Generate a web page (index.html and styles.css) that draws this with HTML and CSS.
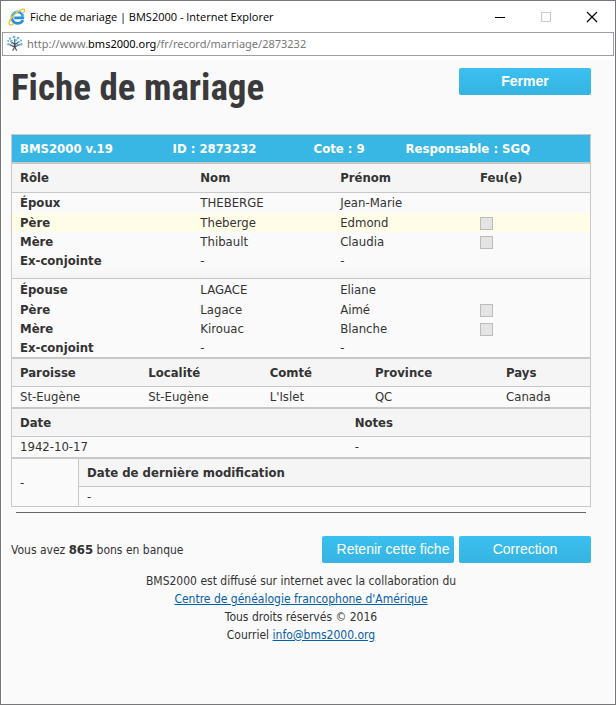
FILE: index.html
```html
<!DOCTYPE html>
<html lang="fr">
  <head>
    <meta charset="UTF-8" />
    <meta name="viewport" content="width=device-width, initial-scale=1.0" />
    <title>Fiche de mariage | BMS2000</title>
    <link rel="stylesheet" href="styles.css">
  </head>
  <body>
    <div class="window">
      <div class="titlebar">
        <svg class="icon" width="18" height="18" viewBox="0 0 18 18" fill="none">
          <path d="M15 12.2C13.8 14.4 11.8 15.4 9.7 15.4C6.4 15.4 4 13 4 9.7C4 6.3 6.4 4 9.7 4C12.9 4 15.1 6.2 14.9 9.9H6.2" stroke="#2b8fd6" stroke-width="2.6" />
          <path d="M15.6 9.2C15.4 5.6 13 3.1 9.7 3.1C6.2 3.1 3.4 6 3.2 9.2" stroke="#5dc3f3" stroke-width="1.4" />
          <path d="M15.4 5C17.3 2.6 16.9 .8 14.7 1.3C11.4 2 5.7 6.5 2.8 11C.6 14.5 .6 17 2.7 16.8C3.8 16.7 5 16 6 15.3" stroke="#f0c83c" stroke-width="1.5" />
        </svg>
        <span class="caption">Fiche de mariage | BMS2000 - Internet Explorer</span>
        <button class="win-btn" aria-label="Réduire">
          <svg width="12" height="12" viewBox="0 0 12 12"><path d="M1 6.5H11" stroke="#000" /></svg>
        </button>
        <button class="win-btn" aria-label="Agrandir" disabled>
          <svg width="12" height="12" viewBox="0 0 12 12"><path d="M1.5 1.5H10.5V10.5H1.5Z" fill="none" stroke="#c8c8c8" /></svg>
        </button>
        <button class="win-btn" aria-label="Fermer la fenêtre">
          <svg width="12" height="12" viewBox="0 0 12 12"><path d="M1 1L11 11M11 1L1 11" stroke="#000" stroke-width="1.2" /></svg>
        </button>
      </div>

      <div class="address">
        <svg class="icon" width="18" height="18" viewBox="0 0 18 18" fill="none">
          <path d="M6.5 15.5C8.3 14.5 8.4 12 8.3 9L4.5 6M8.5 10L13 6.5M8.8 9V4M8.3 12L3.5 9.5M9.5 11.5L14 9.5M8.9 9C8.9 12.5 9.5 14.5 11 15.5" stroke="#4a4f55" stroke-width="1.1" />
          <g fill="#6db6dc">
            <circle cx="4" cy="3.5" r="1.2" /><circle cx="8" cy="2.2" r="1.4" />
            <circle cx="12" cy="3" r="1.3" /><circle cx="15" cy="5.5" r="1.1" />
            <circle cx="2.2" cy="6" r="1.1" /><circle cx="5.5" cy="5.8" r="1.1" />
            <circle cx="10" cy="5.2" r="1.1" /><circle cx="12.8" cy="6.8" r="1.1" />
            <circle cx="2.5" cy="9.2" r="1.3" /><circle cx="15.2" cy="9.3" r="1.3" />
            <circle cx="6" cy="8.5" r="1" /><circle cx="11.5" cy="9.5" r="1" />
          </g>
        </svg>
        <span class="url">http://www.<b>bms2000.org</b>/fr/record/marriage/2873232</span>
      </div>

      <div class="page">
        <div class="heading">
          <h1>Fiche de mariage</h1>
          <button class="btn btn-bold">Fermer</button>
        </div>

        <table class="version">
          <tr>
            <th>BMS2000 v.19</th>
            <th>ID : 2873232</th>
            <th>Cote : 9</th>
            <th>Responsable : SGQ</th>
          </tr>
        </table>

        <table class="people">
          <thead>
            <tr>
              <th>Rôle</th>
              <th>Nom</th>
              <th>Prénom</th>
              <th>Feu(e)</th>
            </tr>
          </thead>
          <tbody class="groom">
            <tr><th>Époux</th><td>THEBERGE</td><td>Jean-Marie</td><td></td></tr>
            <tr class="hover"><th>Père</th><td>Theberge</td><td>Edmond</td><td><input type="checkbox" aria-label="Père de l'époux, feu" disabled></td></tr>
            <tr><th>Mère</th><td>Thibault</td><td>Claudia</td><td><input type="checkbox" aria-label="Mère de l'époux, feue" disabled></td></tr>
            <tr class="last"><th>Ex-conjointe</th><td>-</td><td>-</td><td></td></tr>
          </tbody>
          <tbody class="bride">
            <tr><th>Épouse</th><td>LAGACE</td><td>Eliane</td><td></td></tr>
            <tr><th>Père</th><td>Lagace</td><td>Aimé</td><td><input type="checkbox" aria-label="Père de l'épouse, feu" disabled></td></tr>
            <tr><th>Mère</th><td>Kirouac</td><td>Blanche</td><td><input type="checkbox" aria-label="Mère de l'épouse, feue" disabled></td></tr>
            <tr><th>Ex-conjoint</th><td>-</td><td>-</td><td></td></tr>
          </tbody>
        </table>

        <table class="place">
          <thead>
            <tr>
              <th>Paroisse</th>
              <th>Localité</th>
              <th>Comté</th>
              <th>Province</th>
              <th>Pays</th>
            </tr>
          </thead>
          <tbody>
            <tr>
              <td>St-Eugène</td>
              <td>St-Eugène</td>
              <td>L'Islet</td>
              <td>QC</td>
              <td>Canada</td>
            </tr>
          </tbody>
        </table>

        <table class="date">
          <thead>
            <tr><th>Date</th><th>Notes</th></tr>
          </thead>
          <tbody>
            <tr><td>1942-10-17</td><td>-</td></tr>
          </tbody>
        </table>

        <table class="modified">
          <thead>
            <tr><td class="side" rowspan="2">-</td><th>Date de dernière modification</th></tr>
            <tr><td>-</td></tr>
          </thead>
        </table>

        <hr>

        <div class="actions">
          <p>Vous avez <strong>865</strong> bons en banque</p>
          <button class="btn btn-keep">Retenir cette fiche</button>
          <button class="btn">Correction</button>
        </div>

        <div class="footer">
          <p>BMS2000 est diffusé sur internet avec la collaboration du</p>
          <p><a href="#">Centre de généalogie francophone d'Amérique</a></p>
          <p>Tous droits réservés © 2016</p>
          <p>Courriel <a href="mailto:info@bms2000.org">info@bms2000.org</a></p>
        </div>
      </div>
    </div>
  </body>
</html>
```
FILE: styles.css
```css
* {
  box-sizing: border-box;
  margin: 0;
  padding: 0;
}
body {
  font: 13px/18px "DejaVu Sans Condensed", "DejaVu Sans", sans-serif;
  color: #333;
  background: #fff;
}
.window {
  display: flex;
  flex-direction: column;
  min-height: 100vh;
  border: 1px solid #77777a;
}

/* browser chrome */
.titlebar,
.address {
  display: flex;
  align-items: center;
  font-family: "Open Sans", sans-serif;
  font-size: 11px;
}
.titlebar {
  height: 31px;
  padding-left: 7px;
  color: #000;
}
.icon {
  flex: none;
}
.caption {
  flex: 1;
  padding-left: 4px;
}
.win-btn {
  display: flex;
  align-items: center;
  justify-content: center;
  width: 46px;
  height: 28px;
  border: 0;
  background: none;
}
.address {
  height: 24px;
  margin: 0 1px 4px;
  padding-left: 3px;
  border: 1px solid #a0a0a0;
}
.url {
  padding-left: 3px;
  font-family: "Noto Sans", sans-serif;
  color: #777;
}
.url b {
  font-weight: normal;
  color: #000;
}

/* page */
.page {
  flex: 1;
  margin: 0 2px;
  padding: 8px 22px 16px 8px;
  background: #fafafa;
}
.heading {
  display: flex;
  align-items: flex-start;
  justify-content: space-between;
  height: 66px;
}
h1 {
  font: bold 37px/40px "Roboto Condensed", "Liberation Sans", sans-serif;
  color: #3a3a3c;
}
.btn {
  width: 132px;
  height: 27px;
  border: 0;
  border-radius: 2px;
  font: 14px/27px "Liberation Sans", sans-serif;
  color: #fff;
  background: linear-gradient(#3bc0ef, #36b4e3);
}
.btn-bold {
  font-weight: bold;
}
.btn-keep {
  padding-left: 10px;
}

table {
  width: 100%;
  table-layout: fixed;
  border: 1px solid #c8c8c8;
  border-spacing: 0;
}
th,
td {
  padding: 0 8px;
  text-align: left;
}
thead th {
  height: 28px;
  border-bottom: 1px solid #c8c8c8;
  background: #f5f5f5;
}
td {
  height: 20px;
}
.version th {
  height: 27px;
  color: #fff;
  background: #38b7e5;
}
.version th:nth-child(1) { width: 26.4%; }
.version th:nth-child(2) { width: 24.4%; }
.version th:nth-child(3) { width: 15.9%; }

.people thead th:nth-child(1) { width: 31.2%; }
.people thead th:nth-child(2) { width: 24.2%; }
.people thead th:nth-child(3) { width: 24.2%; }
.people thead th {
  height: 29px;
}
.people td {
  height: 19px;
}
.people tbody tr:first-child td {
  height: 20px;
}
.people .bride tr:first-child td {
  height: 21px;
}
.people .hover {
  background: #fffde8;
}
.people .last th,
.people .last td {
  height: 28px;
  padding-bottom: 7px;
  border-bottom: 1px solid #c8c8c8;
  background: linear-gradient(#fafafa 60%, #f4f4f4);
}
.people input {
  display: block;
  width: 13px;
  height: 13px;
  margin-top: 2px;
  border: 1px solid #bcbcbc;
  background: #e4e4e4;
  appearance: none;
}

.place thead th:nth-child(1) { width: 22.2%; }
.place thead th:nth-child(2) { width: 21%; }
.place thead th:nth-child(3) { width: 18.2%; }
.place thead th:nth-child(4) { width: 22.7%; }

.date thead th:nth-child(1) { width: 57.9%; }

.modified td {
  height: 19px;
}
.modified .side {
  width: 11.6%;
  border-right: 1px solid #c8c8c8;
}

hr {
  margin: 5px 5px 23px;
  border: 0;
  border-top: 1px solid #666;
}
.actions {
  display: flex;
  align-items: center;
  gap: 5px;
  margin-bottom: 9px;
}
.actions p {
  flex: 1;
  font-size: 12px;
}
.actions strong {
  font-size: 13px;
}
.footer {
  font-size: 12px;
  text-align: center;
}
a {
  color: #0660a8;
}
```
